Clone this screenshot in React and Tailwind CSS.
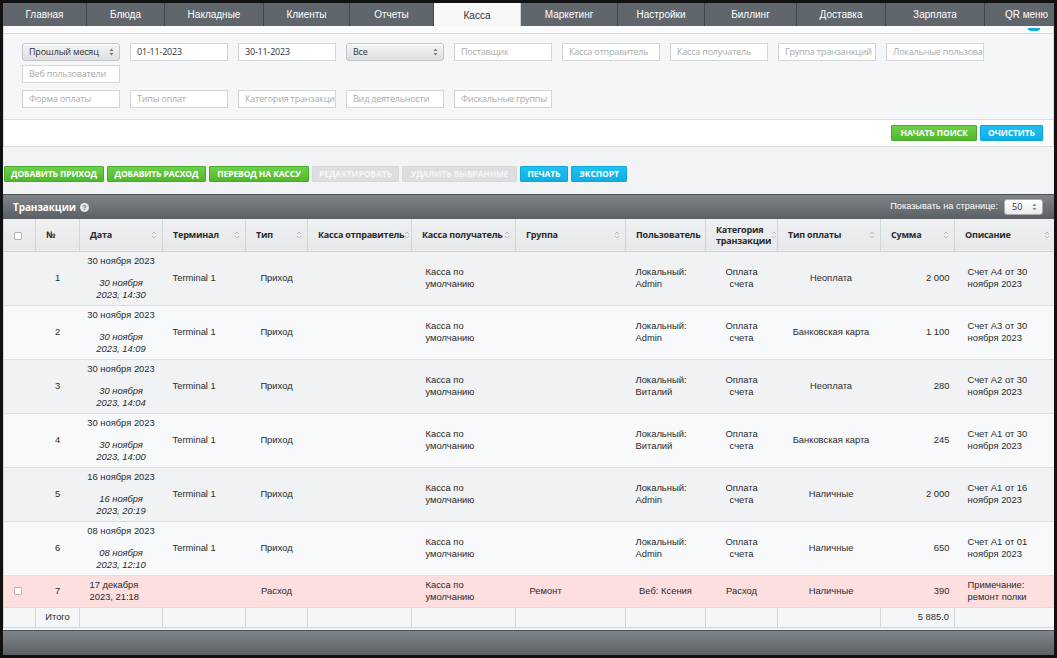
import React from 'react';

const tabs = [
  { label: 'Главная', w: 'w-[84px]' },
  { label: 'Блюда', w: 'w-[78px]' },
  { label: 'Накладные', w: 'w-[99px]' },
  { label: 'Клиенты', w: 'w-[86px]' },
  { label: 'Отчеты', w: 'w-[84px]' },
  { label: 'Касса', w: 'w-[87px]', active: true },
  { label: 'Маркетинг', w: 'w-[97px]' },
  { label: 'Настройки', w: 'w-[87px]' },
  { label: 'Биллинг', w: 'w-[92px]' },
  { label: 'Доставка', w: 'w-[89px]' },
  { label: 'Зарплата', w: 'w-[99px]' },
  { label: 'QR меню', w: 'w-[84px]' },
];

const rows = [
  { n: '1', d: '30 ноября 2023', t: ['30 ноября', '2023, 14:30'], u: 'Admin', pay: 'Неоплата', sum: '2 000', desc: ['Счет А4 от 30', 'ноября 2023'] },
  { n: '2', d: '30 ноября 2023', t: ['30 ноября', '2023, 14:09'], u: 'Admin', pay: 'Банковская карта', sum: '1 100', desc: ['Счет А3 от 30', 'ноября 2023'] },
  { n: '3', d: '30 ноября 2023', t: ['30 ноября', '2023, 14:04'], u: 'Виталий', pay: 'Неоплата', sum: '280', desc: ['Счет А2 от 30', 'ноября 2023'] },
  { n: '4', d: '30 ноября 2023', t: ['30 ноября', '2023, 14:00'], u: 'Виталий', pay: 'Банковская карта', sum: '245', desc: ['Счет А1 от 30', 'ноября 2023'] },
  { n: '5', d: '16 ноября 2023', t: ['16 ноября', '2023, 20:19'], u: 'Admin', pay: 'Наличные', sum: '2 000', desc: ['Счет А1 от 16', 'ноября 2023'] },
  { n: '6', d: '08 ноября 2023', t: ['08 ноября', '2023, 12:10'], u: 'Admin', pay: 'Наличные', sum: '650', desc: ['Счет А1 от 01', 'ноября 2023'] },
];

const openSans = "font-['Open_Sans',sans-serif]";
const arial = "font-['Liberation_Sans',Arial,sans-serif]";

function SortIcon() {
  return (
    <svg width="6" height="10" viewBox="0 0 6 10" className="shrink-0">
      <path d="M1 4 L3 2 L5 4" fill="none" stroke="#b8bcc0" strokeWidth="1" />
      <path d="M1 6 L3 8 L5 6" fill="none" stroke="#b8bcc0" strokeWidth="1" />
    </svg>
  );
}

function SelectArrows({ color = '#777' }) {
  return (
    <svg width="5" height="8" viewBox="0 0 5 8" className="shrink-0">
      <path d="M0.5 3 L2.5 0.5 L4.5 3 Z" fill={color} />
      <path d="M0.5 5 L2.5 7.5 L4.5 5 Z" fill={color} />
    </svg>
  );
}

function Checkbox() {
  return <span className="inline-block w-[8px] h-[8px] bg-white border border-[#b5b5b5] rounded-[1px] align-middle" />;
}

function Field({ value, placeholder }) {
  return (
    <div className={`w-[98px] h-[18px] bg-white border border-[#d3d5d7] px-[6px] flex items-center text-[9px] tracking-[-0.2px] overflow-hidden whitespace-nowrap ${openSans} ${value ? 'text-[#333]' : 'text-[#a9abad]'}`}>
      {value || placeholder}
    </div>
  );
}

function Select({ value }) {
  return (
    <div className={`w-[98px] h-[18px] rounded-[3px] border border-[#c4c6c8] bg-gradient-to-b from-[#f4f4f4] to-[#dedfe0] shadow-[inset_0_1px_0_#fff] pl-[6px] pr-[5px] flex items-center justify-between text-[9px] tracking-[-0.2px] whitespace-nowrap text-[#333] ${openSans}`}>
      <span>{value}</span>
      <SelectArrows />
    </div>
  );
}

function Btn({ children, w, kind }) {
  const colors = {
    green: 'bg-gradient-to-b from-[#6fd04a] to-[#4fb82c] border-[#4aa82b] text-white',
    blue: 'bg-gradient-to-b from-[#1ec0f2] to-[#0eaee3] border-[#0ea5d8] text-white',
    off: 'bg-[#dcdfe2] border-[#d6d9dc] text-[#f5f6f7]',
  };
  return (
    <div className={`${w} h-[16px] border rounded-[1px] flex items-center justify-center text-[8.5px] font-bold uppercase tracking-[-0.1px] whitespace-nowrap ${openSans} ${colors[kind]}`}>
      {children}
    </div>
  );
}

function Th({ children, sort, className = '' }) {
  return (
    <th className={`border-r border-[#d3d6d9] p-0 font-bold text-left align-middle ${className}`}>
      <div className="flex items-center justify-between pl-[10px] pr-[5px] leading-[11px]">
        <span className="whitespace-nowrap">{children}</span>
        {sort && <SortIcon />}
      </div>
    </th>
  );
}

export default function App() {
  return (
    <div className="w-[1057px] h-[658px] bg-[#111] p-[3px]">
      <div className="w-full h-full bg-[#f2f3f4] flex flex-col overflow-hidden relative">
        {/* top menu */}
        <div className={`h-[23px] bg-[#60666c] flex shrink-0 overflow-visible ${arial}`}>
          {tabs.map((t) => (
            <div
              key={t.label}
              className={`${t.w} shrink-0 flex items-center justify-center text-[10px] border-r border-[#43484d] ${
                t.active ? 'bg-[#f8f8f8] text-[#333] h-[24px] border-[#d0d3d6]' : 'text-white'
              }`}
            >
              {t.label}
            </div>
          ))}
        </div>
        <div className="h-[7px] bg-[#fbfbfb] border-x border-[#d5d8db] shrink-0" />
        <div className="absolute right-[14px] top-[25px] w-[12px] h-[3px] rounded-b-[3px] bg-[#14a9e0]" />

        {/* filters */}
        <div className="h-[87px] bg-[#f5f6f7] border border-[#d9dcdf] pl-[18px] pt-[9px] shrink-0">
          <div className="flex flex-wrap gap-x-[10px] gap-y-[4px] w-[1000px]">
            <Select value="Прошлый месяц" />
            <Field value="01-11-2023" />
            <Field value="30-11-2023" />
            <Select value="Все" />
            <Field placeholder="Поставщик" />
            <Field placeholder="Касса отправитель" />
            <Field placeholder="Касса получатель" />
            <Field placeholder="Группа транзанкций" />
            <Field placeholder="Локальные пользоват" />
            <Field placeholder="Веб пользователи" />
          </div>
          <div className="flex gap-x-[10px] mt-[7px]">
            <Field placeholder="Форма оплаты" />
            <Field placeholder="Типы оплат" />
            <Field placeholder="Категория транзакци" />
            <Field placeholder="Вид деятельности" />
            <Field placeholder="Фискальные группы" />
          </div>
        </div>
        <div className="h-[27px] bg-white border-x border-b border-[#d9dcdf] flex items-center justify-end gap-[3px] pr-[10px] shrink-0">
          <Btn w="w-[86px]" kind="green">Начать поиск</Btn>
          <Btn w="w-[63px]" kind="blue">Очистить</Btn>
        </div>

        {/* action buttons */}
        <div className="flex gap-[3px] pl-[1px] mt-[19px] shrink-0">
          <Btn w="w-[100px]" kind="green">Добавить приход</Btn>
          <Btn w="w-[99px]" kind="green">Добавить расход</Btn>
          <Btn w="w-[100px]" kind="green">Перевод на кассу</Btn>
          <Btn w="w-[87px]" kind="off">Редактировать</Btn>
          <Btn w="w-[115px]" kind="off">Удалить выбранные</Btn>
          <Btn w="w-[48px]" kind="blue">Печать</Btn>
          <Btn w="w-[56px]" kind="blue">Экспорт</Btn>
        </div>

        {/* table header bar */}
        <div className="mt-[12px] h-[25px] bg-gradient-to-b from-[#80858a] to-[#5b5f64] border-t border-[#4d5156] flex items-center justify-between pl-[10px] pr-[11px] shrink-0">
          <div className="flex items-center gap-[4px]">
            <span className={`text-white text-[10px] tracking-[-0.1px] font-bold ${openSans}`}>Транзакции</span>
            <span className={`w-[9px] h-[9px] rounded-full bg-[#e4e6e8] text-[#6b7075] text-[7px] font-bold leading-[9px] text-center mt-[1px] ${arial}`}>?</span>
          </div>
          <div className="flex items-center gap-[6px]">
            <span className={`text-white text-[9.2px] ${arial}`}>Показывать на странице:</span>
            <div className={`w-[39px] h-[16px] bg-gradient-to-b from-white to-[#e9eaeb] rounded-[3px] border border-[#aaa] flex items-center justify-between pl-[7px] pr-[5px] text-[9px] text-[#333] ${openSans}`}>
              <span>50</span>
              <SelectArrows color="#888" />
            </div>
          </div>
        </div>

        {/* table */}
        <table className={`w-[1051px] table-fixed border-collapse text-[9.4px] text-[#2b2b2b] ${arial} border-l border-[#d3d6d9] shrink-0`}>
          <colgroup>
            <col className="w-[32px]" />
            <col className="w-[44px]" />
            <col className="w-[83px]" />
            <col className="w-[83px]" />
            <col className="w-[62px]" />
            <col className="w-[104px]" />
            <col className="w-[104px]" />
            <col className="w-[110px]" />
            <col className="w-[80px]" />
            <col className="w-[72px]" />
            <col className="w-[103px]" />
            <col className="w-[74px]" />
            <col className="w-[100px]" />
          </colgroup>
          <thead>
            <tr className={`h-[32px] bg-gradient-to-b from-[#eef0f2] to-[#e6e8ea] border-b border-[#cfd2d5] text-[#2a2a2a] text-[9px] tracking-[-0.2px] ${openSans}`}>
              <th className="border-r border-[#d3d6d9] p-0 pl-[10px] text-left align-middle"><Checkbox /></th>
              <Th>№</Th>
              <Th sort>Дата</Th>
              <Th sort>Терминал</Th>
              <Th sort>Тип</Th>
              <Th sort>Касса отправитель</Th>
              <Th sort>Касса получатель</Th>
              <Th sort>Группа</Th>
              <Th>Пользователь</Th>
              <Th sort>Категория<br />транзакции</Th>
              <Th sort>Тип оплаты</Th>
              <Th sort>Сумма</Th>
              <Th sort className="border-r-0">Описание</Th>
            </tr>
          </thead>
          <tbody>
            {rows.map((r, i) => (
              <tr key={r.n} className={`h-[54px] border-b border-[#dcdfe2] ${i % 2 === 0 ? 'bg-[#f1f2f3]' : 'bg-[#f8f9fa]'}`}>
                <td />
                <td className="text-center align-middle">{r.n}</td>
                <td className="text-center align-middle leading-[12px] px-[4px]">
                  <div>{r.d}</div>
                  <div className="italic mt-[10px]">{r.t[0]}<br />{r.t[1]}</div>
                </td>
                <td className="pl-[10px] align-middle">Terminal 1</td>
                <td className="text-center align-middle">Приход</td>
                <td />
                <td className="pl-[14px] align-middle leading-[12px]">Касса по<br />умолчанию</td>
                <td />
                <td className="align-middle text-center leading-[12px]">
                  <div className="inline-block text-left w-[60px]">Локальный:<br />{r.u}</div>
                </td>
                <td className="text-center align-middle leading-[12px]">Оплата<br />счета</td>
                <td className="text-center align-middle pl-[4px]">{r.pay}</td>
                <td className="text-right align-middle pr-[5px]">{r.sum}</td>
                <td className="pl-[13px] align-middle leading-[12px]">{r.desc[0]}<br />{r.desc[1]}</td>
              </tr>
            ))}
            <tr className="h-[32px] bg-[#fddfe0] border-b border-[#dcdfe2]">
              <td className="pl-[10px] align-middle"><Checkbox /></td>
              <td className="text-center align-middle">7</td>
              <td className="pl-[10px] align-middle leading-[12px]">17 декабря<br />2023, 21:18</td>
              <td />
              <td className="text-center align-middle">Расход</td>
              <td />
              <td className="pl-[14px] align-middle leading-[12px]">Касса по<br />умолчанию</td>
              <td className="pl-[14px] align-middle">Ремонт</td>
              <td className="text-center align-middle">Веб: Ксения</td>
              <td className="text-center align-middle">Расход</td>
              <td className="text-center align-middle pl-[4px]">Наличные</td>
              <td className="text-right align-middle pr-[5px]">390</td>
              <td className="pl-[13px] align-middle leading-[12px]">Примечание:<br />ремонт полки</td>
            </tr>
            <tr className="h-[20px] bg-[#f5f6f7] border-b border-[#d3d6d9] [&>td]:border-r [&>td]:border-[#d3d6d9]">
              <td />
              <td className="text-center align-middle">Итого</td>
              <td /><td /><td /><td /><td /><td /><td /><td /><td />
              <td className="text-right align-middle pr-[5px]">5 885.0</td>
              <td className="border-r-0" />
            </tr>
          </tbody>
        </table>

        {/* bottom bar */}
        <div className="mt-[2px] h-[26px] bg-gradient-to-b from-[#80858a] to-[#5b5f64] border-t border-[#4d5156] shrink-0" />
      </div>
    </div>
  );
}
